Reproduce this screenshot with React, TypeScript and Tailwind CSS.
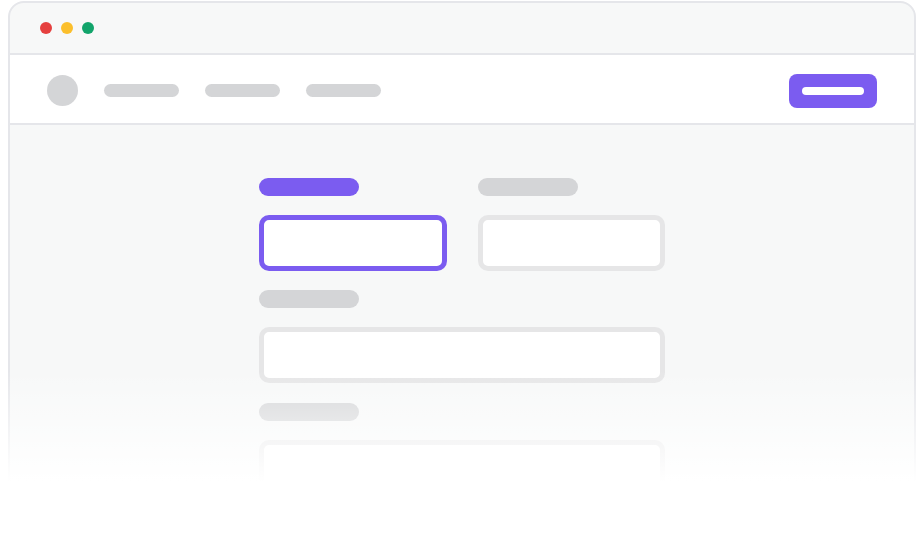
import React from 'react';

const PURPLE = 'bg-[#7b5cf0]';

function Label({ active = false }: { active?: boolean }) {
  return <div className={`h-[18px] w-[100px] rounded-full ${active ? PURPLE : 'bg-[#d4d5d7]'}`} />;
}

function Field({ active = false }: { active?: boolean }) {
  return (
    <div
      className={`h-[56px] rounded-[10px] border-[5px] bg-white ${
        active ? 'border-[#7b5cf0]' : 'border-[#e6e6e7]'
      }`}
    />
  );
}

export default function App() {
  return (
    <div className="relative h-[540px] w-[924px] overflow-hidden bg-white pl-[8px] pt-[1px]">
      {/* Browser window */}
      <div className="flex h-[600px] w-[908px] flex-col rounded-t-[16px] border-2 border-[#e5e6ea] bg-[#f7f8f8]">
        {/* Title bar */}
        <div className="flex h-[52px] items-center gap-[9px] border-b-2 border-[#e5e6ea] pl-[30px]">
          <span className="h-[12px] w-[12px] rounded-full bg-[#e5403f]" />
          <span className="h-[12px] w-[12px] rounded-full bg-[#fbbf2c]" />
          <span className="h-[12px] w-[12px] rounded-full bg-[#12a46b]" />
        </div>

        {/* Nav */}
        <div className="flex h-[70px] items-center justify-between border-b-2 border-[#e5e6ea] bg-white px-[37px] pt-[3px]">
          <div className="flex items-center gap-[26px]">
            <div className="h-[31px] w-[31px] rounded-full bg-[#d4d5d7]" />
            <div className="h-[13px] w-[75px] rounded-full bg-[#d4d5d7]" />
            <div className="h-[13px] w-[75px] rounded-full bg-[#d4d5d7]" />
            <div className="h-[13px] w-[75px] rounded-full bg-[#d4d5d7]" />
          </div>
          <div className={`flex h-[34px] w-[88px] items-center justify-center rounded-lg ${PURPLE}`}>
            <div className="h-[8px] w-[62px] rounded-full bg-white" />
          </div>
        </div>

        {/* Form body */}
        <div className="flex justify-center pt-[53px]">
          <div className="flex w-[406px] flex-col gap-[19px]">
            <div className="grid grid-cols-2 gap-x-[31px] gap-y-[19px]">
              <Label active />
              <Label />
              <Field active />
              <Field />
            </div>
            <Label />
            <Field />
            <div className="mt-[1px]">
              <Label />
            </div>
            <Field />
          </div>
        </div>
      </div>

      {/* Fade-out overlay */}
      <div className="pointer-events-none absolute inset-x-0 top-[370px] h-[112px] bg-gradient-to-b from-white/0 to-white" />
      <div className="pointer-events-none absolute inset-x-0 top-[481px] bottom-0 bg-white" />
    </div>
  );
}
